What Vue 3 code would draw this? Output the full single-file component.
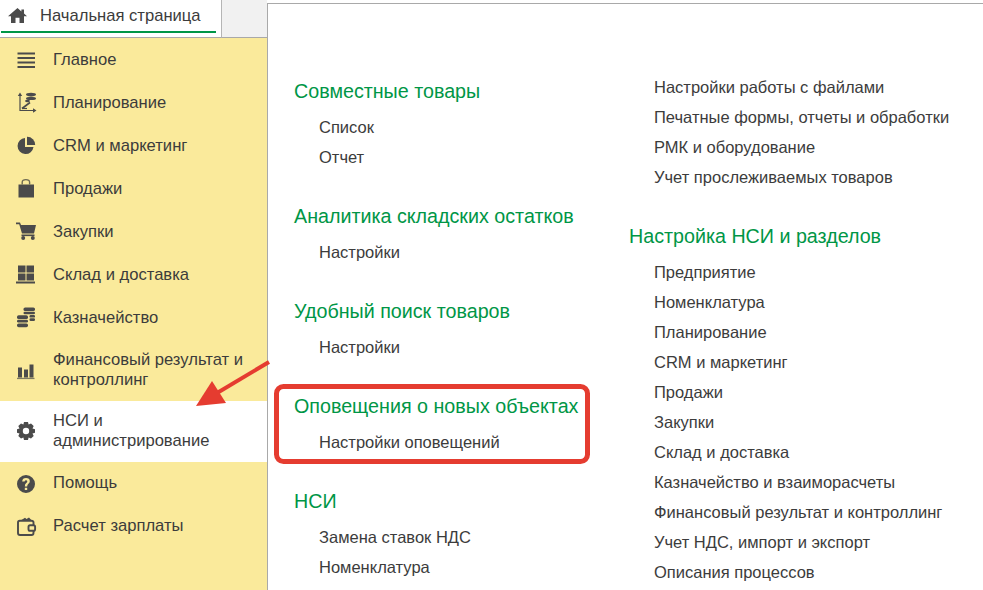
<script setup>
const nav = [
  { id: 'menu', label: 'Главное' },
  { id: 'plan', label: 'Планирование' },
  { id: 'pie', label: 'CRM и маркетинг' },
  { id: 'bag', label: 'Продажи' },
  { id: 'cart', label: 'Закупки' },
  { id: 'wh', label: 'Склад и доставка' },
  { id: 'coins', label: 'Казначейство' },
  { id: 'bars', label: 'Финансовый результат и контроллинг', tall: true },
  { id: 'gear', label: 'НСИ и администрирование', tall: true, active: true },
  { id: 'help', label: 'Помощь', low: true },
  { id: 'wallet', label: 'Расчет зарплаты', low: true }
]
const col1 = [
  { title: 'Совместные товары', items: ['Список', 'Отчет'] },
  { title: 'Аналитика складских остатков', items: ['Настройки'] },
  { title: 'Удобный поиск товаров', items: ['Настройки'] },
  { title: 'Оповещения о новых объектах', items: ['Настройки оповещений'] },
  { title: 'НСИ', items: ['Замена ставок НДС', 'Номенклатура'] }
]
const col2 = [
  { items: ['Настройки работы с файлами', 'Печатные формы, отчеты и обработки', 'РМК и оборудование', 'Учет прослеживаемых товаров'] },
  { title: 'Настройка НСИ и разделов', items: ['Предприятие', 'Номенклатура', 'Планирование', 'CRM и маркетинг', 'Продажи', 'Закупки', 'Склад и доставка', 'Казначейство и взаиморасчеты', 'Финансовый результат и контроллинг', 'Учет НДС, импорт и экспорт', 'Описания процессов'] }
]
</script>

<template>
  <div class="page">
    <header class="top">
      <div class="tab">
        <div class="tab-inner">
          <svg class="home" viewBox="0 0 19 15"><path d="M9.5 0 L0 8.2 H3 V15 H7.5 V9.8 H11.5 V15 H16 V8.2 H19 L16 5.6 V1.5 H13.4 V3.4 Z" /></svg>
          <span class="tab-text">Начальная страница</span>
        </div>
      </div>
      <div class="top-gap"></div>
      <div class="top-right"></div>
    </header>
    <div class="body">
      <aside class="side">
        <div v-for="n in nav" :key="n.id" class="nav" :class="{ tall: n.tall, active: n.active, low: n.low }">
          <span class="ico">
            <svg viewBox="0 0 20 20">
              <template v-if="n.id === 'menu'">
                <rect x="1.5" y="2.5" width="17.5" height="2" /><rect x="1.5" y="7" width="17.5" height="2" /><rect x="1.5" y="11.5" width="17.5" height="2" /><rect x="1.5" y="16" width="17.5" height="2" />
              </template>
              <template v-else-if="n.id === 'plan'">
                <path d="M4 1 V17.5 H19" class="ln thin" /><path d="M1.8 3 L4 -0.5 L6.2 3 Z M17 15.3 L20.5 17.5 L17 19.7 Z" /><path d="M6 15.5 L14 9.5" class="ln" /><path d="M6 15.5 H11" class="ln thin" />
                <ellipse cx="15" cy="1.6" rx="5" ry="1.8" /><ellipse cx="15" cy="5.4" rx="5" ry="1.7" /><ellipse cx="11.5" cy="8" rx="2.4" ry="1.2" />
              </template>
              <template v-else-if="n.id === 'pie'">
                <path d="M9 2 A8 8 0 1 0 17.5 11 H9 Z" /><path d="M11 0.8 A8 8 0 0 1 19.2 9 H11 Z" />
              </template>
              <template v-else-if="n.id === 'bag'">
                <rect x="2.5" y="5.5" width="15.5" height="13" />
                <path d="M6.2 5.5 V3.2 Q6.2 0.6 9.9 0.6 Q13.6 0.6 13.6 3.2 V5.5" class="ln handle" />
              </template>
              <template v-else-if="n.id === 'cart'">
                <path d="M0 0.5 H4 L5 3 H20 L18 11.5 H6 L3.2 2.3 H0 Z" /><rect x="5.5" y="12.5" width="13" height="1.6" /><circle cx="7.2" cy="16" r="2" /><circle cx="16.8" cy="16" r="2" />
              </template>
              <template v-else-if="n.id === 'wh'">
                <rect x="2" y="0.5" width="7.5" height="7" /><rect x="10.5" y="0.5" width="7.5" height="7" /><rect x="2" y="8.5" width="7.5" height="7" /><rect x="10.5" y="8.5" width="7.5" height="7" /><rect x="0" y="16.5" width="19" height="2" />
              </template>
              <template v-else-if="n.id === 'coins'">
                <rect x="7.5" y="-0.5" width="11.5" height="3.6" rx="1.6" /><rect x="7.5" y="3.7" width="11.5" height="2.6" rx="1.3" /><rect x="13.5" y="7" width="5.5" height="2.6" rx="1.2" /><rect x="13.5" y="10.3" width="5.5" height="2.6" rx="1.2" />
                <rect x="1" y="7.3" width="11" height="3.8" rx="1.7" /><rect x="1" y="11.8" width="11" height="2.8" rx="1.4" /><rect x="1" y="15.4" width="11" height="3.8" rx="1.7" />
              </template>
              <template v-else-if="n.id === 'bars'">
                <rect x="2" y="7.5" width="4" height="10" /><rect x="8" y="9.5" width="4" height="8" /><rect x="13.5" y="4.5" width="4" height="13" /><rect x="1" y="17.8" width="17.5" height="1.3" opacity=".7" />
              </template>
              <template v-else-if="n.id === 'gear'">
                <path fill-rule="evenodd" d="M8 1 H12 L12.6 3.5 L15 2.4 L17.7 5.1 L16.5 7.5 L19 8.2 V11.8 L16.5 12.5 L17.7 14.9 L15 17.6 L12.6 16.5 L12 19 H8 L7.4 16.5 L5 17.6 L2.3 14.9 L3.5 12.5 L1 11.8 V8.2 L3.5 7.5 L2.3 5.1 L5 2.4 L7.4 3.5 Z M10 6.8 A3.2 3.2 0 1 0 10 13.2 A3.2 3.2 0 1 0 10 6.8 Z" />
              </template>
              <template v-else-if="n.id === 'help'">
                <path fill-rule="evenodd" d="M10 1 A9 9 0 1 0 10 19 A9 9 0 1 0 10 1 Z M8.8 13.8 H11.2 V16 H8.8 Z M6.2 7.4 Q6.4 4 10 4 Q13.8 4 13.8 7.2 Q13.8 9 12.2 10 Q11.2 10.6 11.2 12.5 H8.8 Q8.8 9.8 10.3 8.9 Q11.3 8.3 11.3 7.3 Q11.3 6.2 10 6.2 Q8.8 6.2 8.6 7.6 Z" />
              </template>
              <template v-else>
                <path d="M17.5 8 V5.5 Q17.5 3.8 15.5 3.8 H3.8 Q2 3.8 2 5.6 V16 Q2 18 4 18 H15.5 Q17.5 18 17.5 16 V14" class="ln wide" />
                <path d="M5 3.2 L9 0.8 L10.5 2 L13 0.5 L15.5 3.2 Z" />
                <rect x="12.5" y="8.2" width="6.6" height="5.6" rx="1.6" class="ln wide" />
              </template>
            </svg>
          </span>
          <span class="nav-text">{{ n.label }}</span>
        </div>
      </aside>
      <main class="content">
        <section class="col col-a">
          <div v-for="g in col1" :key="g.title" class="group">
            <h3 class="head">{{ g.title }}</h3>
            <div v-for="i in g.items" :key="i" class="item">{{ i }}</div>
          </div>
        </section>
        <section class="col col-b">
          <div v-for="(g, k) in col2" :key="k" class="group">
            <h3 v-if="g.title" class="head">{{ g.title }}</h3>
            <div v-for="i in g.items" :key="i" class="item">{{ i }}</div>
          </div>
        </section>
      </main>
    </div>
    <svg class="marks" viewBox="0 0 983 590">
      <rect x="276.5" y="386.5" width="311" height="75" rx="7" class="box" />
      <path d="M269 362 L212 396" class="shaft" />
      <path d="M196 406 L212 381 L226 403 Z" class="head-a" />
    </svg>
  </div>
</template>

<style>
html, body { margin: 0; padding: 0; background: #fff; }
</style>

<style scoped>
.page {
  position: relative;
  width: 983px;
  height: 590px;
  overflow: hidden;
  background: #fff;
  font-family: "Liberation Sans", Arial, sans-serif;
  font-size: 16.6px;
  color: #3c3c3c;
}
.top { display: flex; height: 38px; }
.tab {
  width: 221px;
  height: 37px;
  border-right: 1px solid #b5b5b5;
  border-bottom: 1px solid #a9a9a9;
  background: #fff;
}
.tab-inner {
  display: flex;
  align-items: center;
  gap: 13px;
  width: 215px;
  height: 33px;
  margin-left: 1px;
  padding-left: 7px;
  box-sizing: border-box;
  border-bottom: 2px solid #009646;
}
.home { width: 19px; height: 15px; fill: #4b4b4b; flex: none; }
.tab-text { font-size: 16.6px; color: #3c3c3c; white-space: nowrap; }
.top-gap { width: 45px; height: 37px; background: #f1f1f1; border-bottom: 1px solid #a9a9a9; }
.top-right { flex: 1; border-left: 1px solid #a9a9a9; margin-top: 3px; border-top: 1px solid #a9a9a9; }
.body { display: flex; height: 552px; }
.side {
  width: 267px;
  background: #faea9b;
  border-right: 1px solid #a9a9a9;
  flex: none;
}
.nav { display: flex; align-items: center; height: 43px; }
.nav.tall { height: 61.5px; }
.nav.active { background: #fff; }
.ico { width: 20px; height: 20px; margin-left: 16px; flex: none; }
.ico svg { display: block; width: 20px; height: 20px; fill: #4b4b4b; overflow: visible; }
.ln { fill: none; stroke: #4b4b4b; stroke-width: 1.6; }
.ln.thin { stroke-width: 1.2; }
.ln.wide { stroke-width: 1.9; }
.ln.handle { stroke: #6e6a52; stroke-width: 1.4; }
.nav-text { margin-left: 17px; width: 196px; line-height: 20px; }
.nav.low .nav-text { margin-bottom: 2px; }
.content { display: flex; flex: 1; }
.col-a { width: 335px; margin-left: 26px; padding-top: 38px; flex: none; }
.col-b { padding-top: 34px; }
.group + .group { margin-top: 29px; }
.head {
  margin: 0 0 6px;
  height: 30px;
  line-height: 30px;
  font-size: 19.7px;
  font-weight: 400;
  color: #009646;
  white-space: nowrap;
}
.item {
  height: 30px;
  line-height: 30px;
  margin-left: 25px;
  white-space: nowrap;
  font-size: 16.5px;
}
.marks { position: absolute; left: 0; top: 0; width: 983px; height: 590px; pointer-events: none; }
.box { fill: none; stroke: #e53c30; stroke-width: 5; }
.shaft { fill: none; stroke: #e53c30; stroke-width: 4; }
.head-a { fill: #e53c30; }
</style>
